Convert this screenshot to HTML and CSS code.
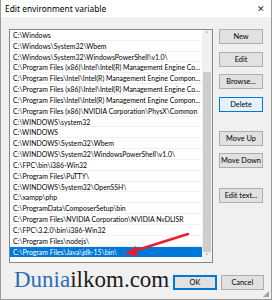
FILE: index.html
```html
<!DOCTYPE html>
<html>

<head>
    <title>Edit environment variable</title>
    <meta charset="utf-8">
    <link rel="stylesheet" href="styles.css">
</head>

<body>
    <div class="env-window">
        <div class="env-title">
            <span>Edit environment variable</span>
            <span class="env-close">&#x2715;</span>
        </div>
        <div class="env-body">
            <div class="env-main">
                <div class="env-list">
                    <ul class="env-rows">
                        <li>C:\Windows</li>
                        <li>C:\Windows\System32\Wbem</li>
                        <li>C:\Windows\System32\WindowsPowerShell\v1.0\</li>
                        <li>C:\Program Files (x86)\Intel\Intel(R) Management Engine Co...</li>
                        <li>C:\Program Files\Intel\Intel(R) Management Engine Compon...</li>
                        <li>C:\Program Files (x86)\Intel\Intel(R) Management Engine Co...</li>
                        <li>C:\Program Files\Intel\Intel(R) Management Engine Compon...</li>
                        <li>C:\Program Files (x86)\NVIDIA Corporation\PhysX\Common</li>
                        <li>C:\WINDOWS\system32</li>
                        <li>C:\WINDOWS</li>
                        <li>C:\WINDOWS\System32\Wbem</li>
                        <li>C:\WINDOWS\System32\WindowsPowerShell\v1.0\</li>
                        <li>C:\FPC\bin\i386-Win32</li>
                        <li>C:\Program Files\PuTTY\</li>
                        <li>C:\WINDOWS\System32\OpenSSH\</li>
                        <li>C:\xampp\php</li>
                        <li>C:\ProgramData\ComposerSetup\bin</li>
                        <li>C:\Program Files\NVIDIA Corporation\NVIDIA NvDLISR</li>
                        <li>C:\FPC\3.2.0\bin\i386-Win32</li>
                        <li>C:\Program Files\nodejs\</li>
                        <li class="selected">C:\Program Files\Java\jdk-15\bin\</li>
                    </ul>
                    <div class="env-scroll">
                        <span class="env-arrow">&#x2C4;</span>
                        <span class="env-track"><span class="env-thumb"></span></span>
                        <span class="env-arrow">&#x2C5;</span>
                    </div>
                </div>
                <div class="env-buttons">
                    <button>New</button>
                    <button>Edit</button>
                    <button>Browse...</button>
                    <button class="hover">Delete</button>
                    <button class="gap">Move Up</button>
                    <button>Move Down</button>
                    <button class="gap">Edit text...</button>
                </div>
            </div>
            <div class="env-footer">
                <div class="env-logo"><span class="blue">Dunia</span>ilkom.com</div>
                <button class="focus">OK</button>
                <button>Cancel</button>
            </div>
        </div>
        <svg class="env-pointer" width="272" height="300" viewBox="0 0 272 300">
            <line x1="188" y1="234" x2="134" y2="251" stroke="#e8202a" stroke-width="2.4" stroke-linecap="round" />
            <polygon points="125,254 136,246 138,256" fill="#e8202a" />
        </svg>
        <span class="env-grip"></span>
    </div>
</body>

</html>
```

FILE: styles.css
```css
body {
    margin: 0;
    overflow: hidden;
}

.env-window {
    position: relative;
    width: 272px;
    height: 300px;
    box-sizing: border-box;
    border: 1px solid #9a9a9a;
    border-top: none;
    background-color: #f0f0f0;
    font-family: "Noto Sans", "Open Sans", sans-serif;
    color: #000;
}

.env-title {
    display: flex;
    justify-content: space-between;
    align-items: center;
    height: 17px;
    padding: 0 6px 0 4px;
    background-color: #fff;
    font-size: 8.4px;
}

.env-close {
    font-size: 9px;
    color: #333;
}

.env-body {
    padding: 12px 7px 0 8px;
}

.env-main {
    display: flex;
    gap: 6px;
}

.env-list {
    display: flex;
    width: 204px;
    height: 234px;
    box-sizing: border-box;
    border: 1px solid #828790;
    background-color: #fff;
    overflow: hidden;
}

.env-rows {
    flex: 1;
    min-width: 0;
    margin: 0;
    padding: 0;
    list-style: none;
    font-family: Lato, "Noto Sans", sans-serif;
    font-size: 6.9px;
}

.env-rows li {
    height: 10.83px;
    line-height: 10.83px;
    padding-left: 3px;
    box-sizing: border-box;
    border-bottom: 1px solid #f0f0f0;
    white-space: nowrap;
    overflow: hidden;
}

.env-rows li.selected {
    background-color: #0078d7;
    color: #fff;
    border-bottom-color: #0078d7;
}

.env-scroll {
    display: flex;
    flex-direction: column;
    flex-shrink: 0;
    width: 10px;
    background-color: #f0f0f0;
}

.env-arrow {
    height: 10px;
    text-align: center;
    font-size: 8px;
    line-height: 10px;
    color: #606060;
}

.env-track {
    flex: 1;
    display: flex;
    flex-direction: column;
    justify-content: flex-end;
}

.env-thumb {
    height: 180px;
    margin: 0 1px;
    background-color: #cdcdcd;
}

.env-buttons {
    display: flex;
    flex-direction: column;
    gap: 7.6px;
}

.env-buttons button,
.env-footer button {
    width: 44px;
    height: 15px;
    padding: 0;
    border: 1px solid #adadad;
    background-color: #e1e1e1;
    font-family: Lato, "Noto Sans", sans-serif;
    font-size: 7.4px;
    color: #000;
}

.env-buttons button.gap {
    margin-top: 11.5px;
}

.env-buttons button.hover {
    border-color: #0078d7;
    background-color: #e5f1fb;
}

.env-footer button.focus {
    border-color: #0078d7;
    box-shadow: inset 0 0 0 1px #0078d7;
}

.env-footer {
    display: flex;
    align-items: flex-start;
    gap: 4px;
    margin-top: 8px;
}

.env-footer button {
    margin-top: 4px;
}

.env-logo {
    flex: 1;
    padding-left: 5px;
    font-family: "Liberation Serif", serif;
    font-size: 23px;
    line-height: 18px;
    color: #1a1a1a;
}

.env-logo .blue {
    color: #2e6db6;
}

.env-pointer {
    position: absolute;
    top: 0;
    left: -1px;
    pointer-events: none;
}

.env-grip {
    position: absolute;
    right: 2px;
    bottom: 2px;
    width: 6px;
    height: 6px;
    background: radial-gradient(circle, #9a9a9a 0.7px, transparent 0.8px) 0 0 / 2px 2px;
    clip-path: polygon(100% 0, 100% 100%, 0 100%);
}
```
